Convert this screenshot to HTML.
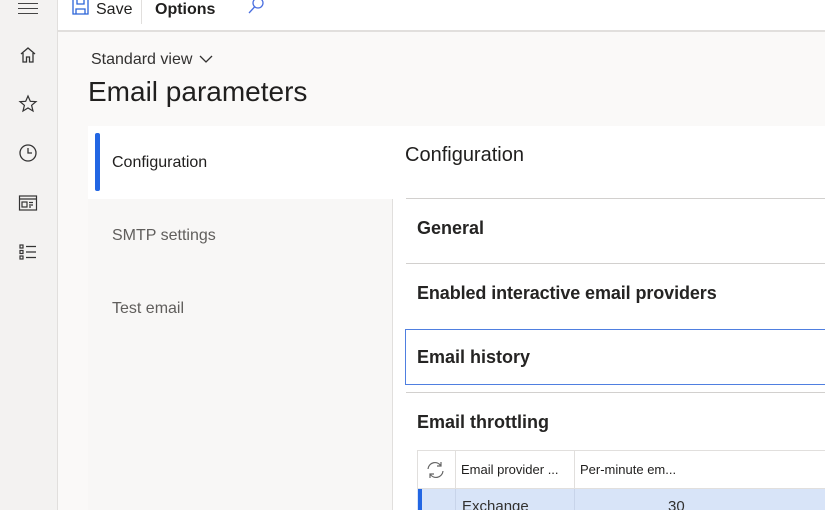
<!DOCTYPE html>
<html><head><style>
*{margin:0;padding:0;box-sizing:border-box}
html,body{width:825px;height:510px;overflow:hidden}
body{background:#faf9f8;font-family:"Liberation Sans",sans-serif;color:#201f1e;position:relative}
.a{position:absolute}
</style></head><body>
<div class="a" style="left:0;top:0;width:58px;height:510px;background:#f3f2f1;border-right:1px solid #e1dfdd"></div>
<div class="a" style="left:18px;top:3px;width:20px;height:1px;background:#444"></div>
<div class="a" style="left:18px;top:8px;width:20px;height:1px;background:#444"></div>
<div class="a" style="left:18px;top:13px;width:20px;height:1px;background:#444"></div>
<svg class="a" style="left:18px;top:45px" width="20" height="20" viewBox="0 0 20 20" fill="none" stroke="#333" stroke-width="1.3"><path d="M3 9 L10 3 L17 9 M5 8 V17 H8.5 V12 H11.5 V17 H15 V8"/></svg>
<svg class="a" style="left:18px;top:94px" width="20" height="20" viewBox="0 0 20 20" fill="none" stroke="#333" stroke-width="1.2"><path d="M10 2 L12.3 7.3 L18 7.6 L13.6 11.3 L15 17 L10 14 L5 17 L6.4 11.3 L2 7.6 L7.7 7.3Z"/></svg>
<svg class="a" style="left:18px;top:143px" width="20" height="20" viewBox="0 0 20 20" fill="none" stroke="#333" stroke-width="1.3"><circle cx="10" cy="10" r="8"/><path d="M10 5 V10 H14"/></svg>
<svg class="a" style="left:18px;top:193px" width="20" height="20" viewBox="0 0 20 20" fill="none" stroke="#333" stroke-width="1.2"><rect x="1.5" y="3" width="17" height="14"/><path d="M1.5 6 H18.5"/><rect x="4" y="9" width="5" height="5"/><path d="M11 9.5H15M11 12H15M11 14H13"/></svg>
<svg class="a" style="left:18px;top:242px" width="20" height="20" viewBox="0 0 20 20" fill="none" stroke="#333" stroke-width="1.2"><rect x="2" y="3" width="3" height="3"/><rect x="2" y="8.5" width="3" height="3"/><rect x="2" y="14" width="3" height="3"/><path d="M8 4.5H18M8 10H18M8 15.5H18"/></svg>
<div class="a" style="left:58px;top:0;width:767px;height:32px;background:#fff;border-bottom:2px solid #e1dfdd"></div>
<svg class="a" style="left:72px;top:0" width="18" height="15" viewBox="0 0 18 15" fill="none" stroke="#2b63d8" stroke-width="1.3"><path d="M1 0 V14 H16 V0 M4 14 V9 H13 V14 M5 0 V4 H12 V0"/></svg>
<div class="a" style="left:96px;top:1px;font-size:16px;line-height:18px">Save</div>
<div class="a" style="left:141px;top:0;width:1px;height:24px;background:#e1dfdd"></div>
<div class="a" style="left:155px;top:1px;font-size:16px;line-height:18px;font-weight:bold">Options</div>
<svg class="a" style="left:246px;top:0" width="20" height="16" viewBox="0 0 20 16" fill="none" stroke="#4a6fe0" stroke-width="1.3"><circle cx="12" cy="3" r="5"/><path d="M8.5 7 L3 13"/></svg>
<div class="a" style="left:91px;top:51px;font-size:16px;color:#323130">Standard view</div>
<svg class="a" style="left:199px;top:54px" width="14" height="10" viewBox="0 0 14 10" fill="none" stroke="#323130" stroke-width="1.3"><path d="M1 2 L7 8 L13 2"/></svg>
<div class="a" style="left:88px;top:75px;font-size:28px;line-height:34px">Email parameters</div>
<div class="a" style="left:88px;top:126px;width:737px;height:73px;background:#fff"></div>
<div class="a" style="left:88px;top:199px;width:305px;height:311px;background:#f8f7f6;border-right:1px solid #e1dfdd"></div>
<div class="a" style="left:393px;top:199px;width:432px;height:311px;background:#fff"></div>
<div class="a" style="left:95px;top:133px;width:5px;height:58px;background:#2266e3;border-radius:2px"></div>
<div class="a" style="left:112px;top:154px;font-size:16px">Configuration</div>
<div class="a" style="left:112px;top:227px;font-size:16px;color:#605e5c">SMTP settings</div>
<div class="a" style="left:112px;top:300px;font-size:16px;color:#605e5c">Test email</div>
<div class="a" style="left:405px;top:144px;font-size:20px">Configuration</div>
<div class="a" style="left:406px;top:198px;width:419px;height:1px;background:#d2d0ce"></div>
<div class="a" style="left:417px;top:218px;font-size:18px;font-weight:bold;color:#252423">General</div>
<div class="a" style="left:406px;top:263px;width:419px;height:1px;background:#d2d0ce"></div>
<div class="a" style="left:417px;top:283px;font-size:18px;font-weight:bold;color:#252423;letter-spacing:-0.1px">Enabled interactive email providers</div>
<div class="a" style="left:405px;top:329px;width:425px;height:56px;border:1px solid #4f7fe0"></div>
<div class="a" style="left:417px;top:347px;font-size:18px;font-weight:bold;color:#252423">Email history</div>
<div class="a" style="left:406px;top:392px;width:419px;height:1px;background:#d2d0ce"></div>
<div class="a" style="left:417px;top:412px;font-size:18px;font-weight:bold;color:#252423">Email throttling</div>
<div class="a" style="left:417px;top:450px;width:408px;height:39px;border:1px solid #e1dfdd;border-right:none"></div>
<div class="a" style="left:455px;top:451px;width:1px;height:59px;background:#e1dfdd"></div>
<div class="a" style="left:574px;top:451px;width:1px;height:59px;background:#e1dfdd"></div>
<svg class="a" style="left:426px;top:461px" width="19" height="18" viewBox="0 0 19 18" fill="none" stroke="#666" stroke-width="1.2"><path d="M2 8 A7 7 0 0 1 15 5 M15 1 V5 H11 M17 10 A7 7 0 0 1 4 13 M4 17 V13 H8"/></svg>
<div class="a" style="left:461px;top:462px;font-size:13px">Email provider ...</div>
<div class="a" style="left:580px;top:462px;font-size:13px">Per-minute em...</div>
<div class="a" style="left:417px;top:489px;width:408px;height:21px;background:#d8e4f8"></div>
<div class="a" style="left:418px;top:489px;width:4px;height:21px;background:#2266e3"></div>
<div class="a" style="left:455px;top:489px;width:1px;height:21px;background:#c8d4ea"></div>
<div class="a" style="left:574px;top:489px;width:1px;height:21px;background:#c8d4ea"></div>
<div class="a" style="left:462px;top:498px;font-size:15px;color:#323130">Exchange</div>
<div class="a" style="left:668px;top:498px;font-size:15px;color:#323130">30</div>
</body></html>
